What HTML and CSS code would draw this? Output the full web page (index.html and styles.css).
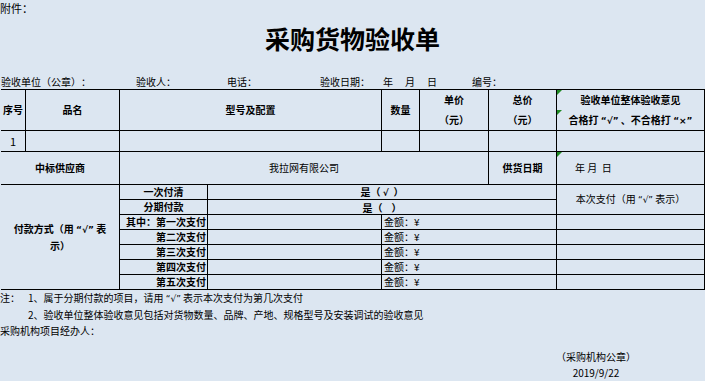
FILE: index.html
```html
<!DOCTYPE html>
<html lang="zh-CN">
<head>
<meta charset="utf-8">
<title>采购货物验收单</title>
<link rel="stylesheet" href="styles.css">
</head>
<body>
<div class="page">
  <div class="attach">附件：</div>
  <h1 class="title">采购货物验收单</h1>
  <div class="info">
    <span class="f1">验收单位（公章）：</span>
    <span class="f2">验收人：</span>
    <span class="f3">电话：</span>
    <span class="f4">验收日期：</span>
    <span class="f5">年</span>
    <span class="f5">月</span>
    <span class="f6">日</span>
    <span>编号：</span>
  </div>

  <div class="sheet">
    <!-- header -->
    <div class="c b">序号</div>
    <div class="c b">品名</div>
    <div class="c b s2">型号及配置</div>
    <div class="c b">数量</div>
    <div class="c b two"><span>单价</span><span>（元）</span></div>
    <div class="c b two"><span>总价</span><span>（元）</span></div>
    <div class="c b two tri tri2"><span>验收单位整体验收意见</span><span>合格打 <i class="q">“√”</i> 、不合格打 <i class="q">“×”</i></span></div>

    <!-- row 1 -->
    <div class="c num">1</div>
    <div class="c"></div>
    <div class="c s2"></div>
    <div class="c"></div>
    <div class="c"></div>
    <div class="c"></div>
    <div class="c"></div>

    <!-- supplier -->
    <div class="c b s2">中标供应商</div>
    <div class="c s4">我拉网有限公司</div>
    <div class="c b">供货日期</div>
    <div class="c l date tri">年 月&nbsp;&nbsp;日</div>

    <!-- payment -->
    <div class="c b s2 pay"><span>付款方式（用 <i class="q">“√”</i> 表<br>示）</span></div>
    <div class="c b">一次付清</div>
    <div class="c b s4"><span>是（&nbsp;<i class="q">√</i>&nbsp;&nbsp;）</span></div>
    <div class="c rs2"><span>本次支付（用 <i class="q">“√”</i> 表示）</span></div>

    <div class="c b">分期付款</div>
    <div class="c b s4 low"><span>是（&nbsp;&nbsp;&nbsp;&nbsp;）</span></div>

    <div class="c b r">其中：第一次支付</div>
    <div class="c"></div>
    <div class="c l s3">金额：¥</div>
    <div class="c"></div>

    <div class="c b r">第二次支付</div>
    <div class="c"></div>
    <div class="c l s3">金额：¥</div>
    <div class="c"></div>

    <div class="c b r">第三次支付</div>
    <div class="c"></div>
    <div class="c l s3">金额：¥</div>
    <div class="c"></div>

    <div class="c b r">第四次支付</div>
    <div class="c"></div>
    <div class="c l s3">金额：¥</div>
    <div class="c"></div>

    <div class="c b r">第五次支付</div>
    <div class="c"></div>
    <div class="c l s3">金额：¥</div>
    <div class="c"></div>
  </div>

  <div class="notes">
    <div><span class="note-lab">注：</span>1、属于分期付款的项目，请用 <i class="q">“√”</i> 表示本次支付为第几次支付</div>
    <div class="indent">2、验收单位整体验收意见包括对货物数量、品牌、产地、规格型号及安装调试的验收意见</div>
    <div>采购机构项目经办人：</div>
  </div>

  <div class="seal">
    <div>（采购机构公章）</div>
    <div>2019/9/22</div>
  </div>
</div>
</body>
</html>
```

FILE: styles.css
```css
html, body {
  margin: 0;
  padding: 0;
  background: #dce6f1;
}

body {
  font-family: "Noto Sans CJK SC", "Noto Sans", sans-serif;
  font-size: 10px;
  color: #000;
  text-spacing-trim: space-all;
}

.page {
  width: 705px;
  height: 381px;
  overflow: hidden;
}

.q {
  font-style: normal;
  font-family: "DejaVu Sans", sans-serif;
  font-size: 9px;
}

.attach {
  height: 16px;
  line-height: 16px;
  font-size: 11px;
}

.title {
  margin: 7px 0 21px;
  font-size: 25px;
  line-height: 30px;
  font-weight: 700;
  text-align: center;
}

.info {
  display: flex;
  height: 15px;
  line-height: 15px;
  white-space: nowrap;
  padding-left: 1px;
}

.info span { flex: none; }
.f1 { width: 135px; }
.f2 { width: 91px; }
.f3 { width: 93px; }
.f4 { width: 63px; }
.f5 { width: 22px; }
.f6 { width: 45px; }

.sheet {
  display: grid;
  grid-template-columns: 25px 94px 88px 174px 38px 69px 68px 148px;
  grid-template-rows: 41px 21px 33px repeat(7, 15px);
  width: 704px;
  margin-left: 1px;
  border-top: 1px solid #000;
}

.c {
  position: relative;
  box-sizing: border-box;
  border-right: 1px solid #000;
  border-bottom: 1px solid #000;
  display: flex;
  align-items: center;
  justify-content: center;
  text-align: center;
  line-height: 14px;
  white-space: nowrap;
}

.b { font-weight: 700; }

.s2 { grid-column: span 2; }
.s3 { grid-column: span 3; }
.s4 { grid-column: span 4; }

.two {
  flex-direction: column;
}

.two span {
  line-height: 20px;
}

.num { font-size: 11px; }

.l {
  justify-content: flex-start;
  padding-left: 2px;
}

.r {
  justify-content: flex-end;
  padding-right: 1px;
}

.date {
  padding-left: 18px;
}

.pay {
  grid-row: span 7;
  line-height: 16px;
}

.rs2 {
  grid-row: span 2;
}

.low {
  padding-top: 2px;
}

.tri::before {
  content: "";
  position: absolute;
  left: 0;
  top: 0;
  border-top: 5px solid #1f8a24;
  border-right: 5px solid transparent;
}

.tri2::after {
  content: "";
  position: absolute;
  left: 0;
  top: 20px;
  border-top: 5px solid #1f8a24;
  border-right: 5px solid transparent;
}

.notes {
  line-height: 16px;
  white-space: nowrap;
}

.note-lab {
  display: inline-block;
  width: 28px;
}

.indent {
  padding-left: 28px;
}

.seal {
  display: flex;
  flex-direction: column;
  align-items: center;
  width: 100px;
  margin: 10px 0 0 546px;
  line-height: 16px;
}
```
